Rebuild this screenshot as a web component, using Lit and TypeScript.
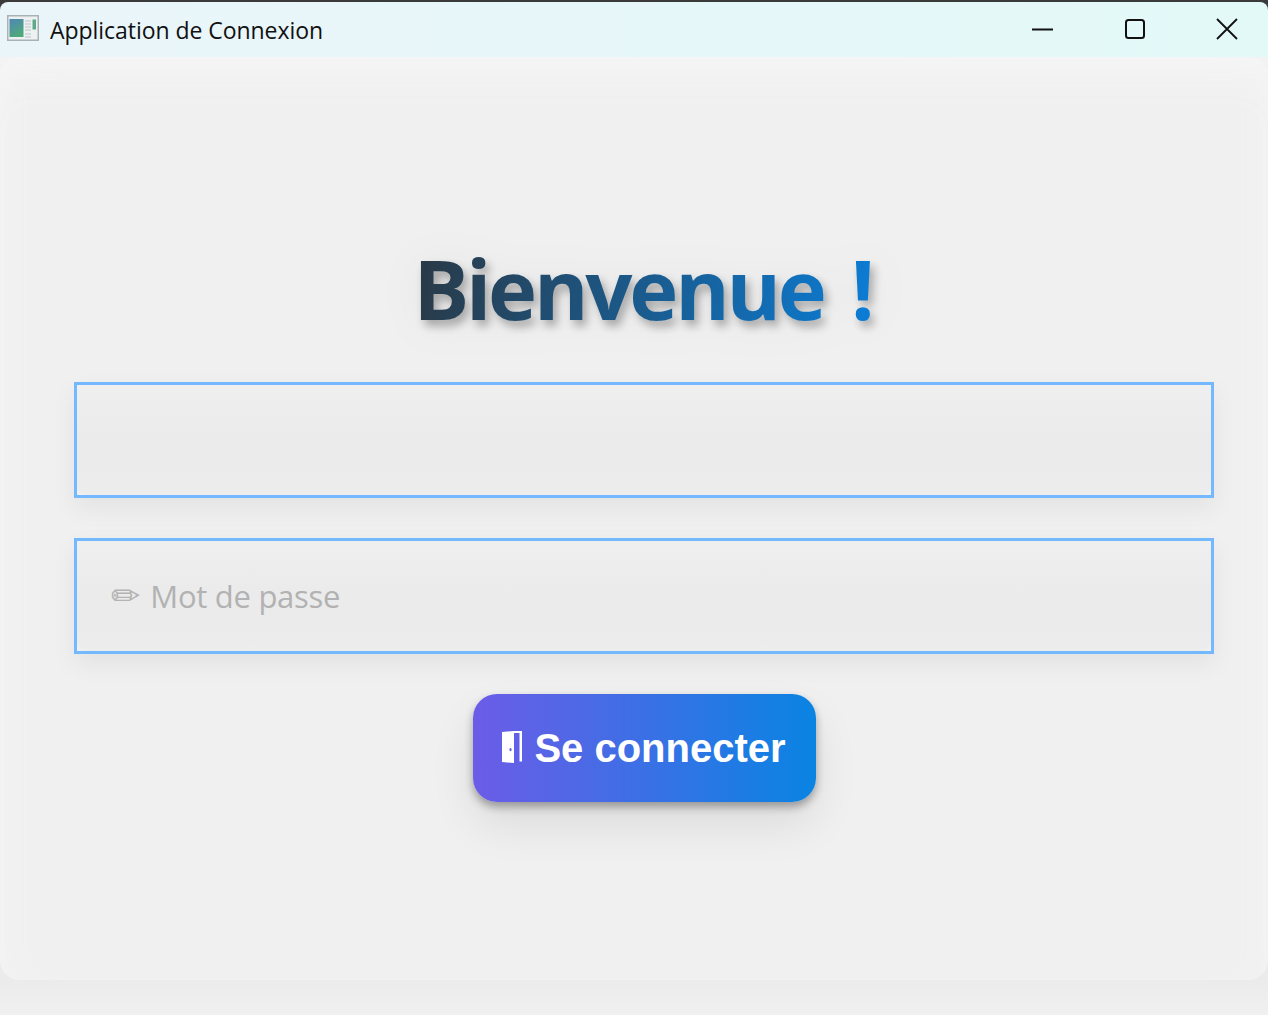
import { LitElement, html, css } from "lit";
import { customElement } from "lit/decorators.js";

@customElement("app-root")
export class AppRoot extends LitElement {
  static styles = css`
    :host { display: block; width: 1268px; height: 1015px; overflow: hidden; background: #f0f0f0; font-family: "Open Sans", "Noto Sans", sans-serif; }
    .window { height: 1015px; display: flex; flex-direction: column; background: #3a3a3a; }
    .titlebar { flex: 0 0 55px; margin-top: 2px; display: flex; align-items: center; background: linear-gradient(90deg, #eaf5fa, #e3f9f8); border-radius: 8px 8px 0 0; padding-left: 7px; box-sizing: border-box; }
    .app-icon { width: 32px; height: 26px; display: block; margin-top: -3px; }
    .title { margin-left: 11px; font-size: 23px; color: #111; font-family: "Open Sans", sans-serif; letter-spacing: -0.05px; }
    .controls { margin-left: auto; display: flex; margin-top: -1px; padding-right: 30px; gap: 70px; }
    .controls svg { width: 22px; height: 22px; display: block; }
    .client { flex: 1; background: #f3f3f3; background-image: linear-gradient(180deg, #ebebeb 0, #ebebeb 22px, #f0f0f0 100%); background-position: 0 100%; background-size: 100% 57px; background-repeat: no-repeat; display: flex; flex-direction: column; }
    .panel { height: 923px; box-sizing: border-box; background: #f0f0f0; border-radius: 20px; padding: 176px 54px 0 74px; display: flex; flex-direction: column; align-items: stretch; box-shadow: inset 0 40px 40px -24px #f6f6f6, inset 24px 0 30px -20px #f4f4f4, inset -24px 0 30px -20px #f3f3f3; }
    h1 { align-self: center; margin: 0 3px 39px 0; font-size: 83px; line-height: 110px; font-weight: 700; font-family: "Open Sans", sans-serif; letter-spacing: -3.2px; word-spacing: 9px; background: linear-gradient(100deg, #2a3844, #0b7dd6); -webkit-background-clip: text; background-clip: text; color: transparent; filter: drop-shadow(4px 6px 5px rgba(0,0,0,.3)) drop-shadow(0 2px 20px rgba(0,0,0,.05)); }
    .field { height: 116px; box-sizing: border-box; border: 3px solid #74b9ff; background: #f0f0f0; box-shadow: 0 10px 24px rgba(0,0,0,.06); }
    .field + .field { margin-top: 40px; }
    .inner { height: 100%; display: flex; align-items: center; gap: 10px; padding: 0 34px; border-radius: 10px; background: linear-gradient(180deg, #efefef, #ebebeb 45%, #ebebeb 80%, #ededed); box-sizing: border-box; }
    .pencil { font: 35px "DejaVu Sans", sans-serif; color: #b4b4b4; line-height: 1; flex: none; }
    input { flex: 1; min-width: 0; height: 100%; border: 0; outline: 0; padding: 0; background: transparent; font: 31px "Open Sans", sans-serif; letter-spacing: -0.28px; color: #222; }
    input::placeholder { color: #b2b2b2; opacity: 1; }
    button { align-self: center; margin-top: 40px; width: 343px; height: 108px; border: 0; border-radius: 24px; background: linear-gradient(90deg, #6c5ce7, #0984e3); color: #fff; font: 700 40px "Liberation Sans", Arial, sans-serif; display: flex; align-items: center; justify-content: center; gap: 12px; padding: 0; box-shadow: 0 5px 8px rgba(0,0,0,.32), 0 22px 45px rgba(0,0,0,.09); }
    button svg { width: 20px; height: 32px; display: block; margin-top: -3px; }
  `;

  render() {
    return html`
      <div class="window">
        <div class="titlebar">
          <svg class="app-icon" viewBox="0 0 32 26">
            <defs><linearGradient id="g" x1="0" y1="0" x2="0.5" y2="1"><stop offset="0" stop-color="#4f86b8"/><stop offset="1" stop-color="#4fa87a"/></linearGradient></defs>
            <rect x="0.75" y="0.75" width="30.5" height="24.5" fill="#eef1f2" stroke="#a9b1b6" stroke-width="1.5"/>
            <rect x="2.5" y="4" width="14" height="18" fill="url(#g)"/>
            <path d="M18 6h6M18 9h6M18 12h6M18 15h6M18 19h6M18 22h6" stroke="#bcc3c7" stroke-width="1"/>
            <rect x="25.5" y="4.5" width="3.5" height="10" fill="#5fa98a"/>
          </svg>
          <span class="title">Application de Connexion</span>
          <div class="controls">
            <svg viewBox="0 0 22 22"><path d="M0 11.5h21" stroke="#111" stroke-width="2"/></svg>
            <svg viewBox="0 0 22 22"><rect x="2" y="2" width="18" height="18" rx="2.5" fill="none" stroke="#111" stroke-width="2"/></svg>
            <svg viewBox="0 0 22 22"><path d="M1 1l20 20M21 1L1 21" stroke="#111" stroke-width="1.8"/></svg>
          </div>
        </div>
        <div class="client">
          <div class="panel">
            <h1>Bienvenue !</h1>
            <div class="field"><div class="inner"><input type="text" /></div></div>
            <div class="field"><div class="inner"><span class="pencil">✏</span><input type="password" placeholder="Mot de passe" /></div></div>
            <button>
              <svg viewBox="0 0 20 32">
                <path fill="#fff" fill-rule="evenodd" d="M0 1L12 0V32L0 31ZM8.5 17a1.1 1.6 0 1 0 .01 0Z"/>
                <path fill="#fff" d="M12 0h8V30.5h-2.5V2H12Z"/>
              </svg>
              <span>Se connecter</span>
            </button>
          </div>
        </div>
      </div>
    `;
  }
}
